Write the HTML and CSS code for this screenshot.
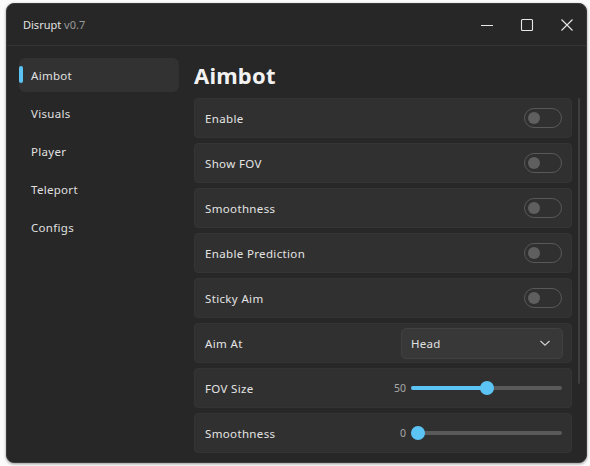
FILE: index.html
```html
<!DOCTYPE html>
<html>
<head>
<meta charset="utf-8">
<link rel="stylesheet" href="styles.css">
</head>
<body>
<div class="window">
  <div class="titlebar">
    <div class="title">Disrupt <span class="ver">v0.7</span></div>
    <div class="controls">
      <svg class="ctl" width="14" height="14" viewBox="0 0 14 14"><path d="M1 7.5h12" stroke="#e8e8e8" stroke-width="1.1"/></svg>
      <svg class="ctl" width="14" height="14" viewBox="0 0 14 14"><rect x="1.5" y="1.5" width="11" height="11" rx="1" fill="none" stroke="#e8e8e8" stroke-width="1.1"/></svg>
      <svg class="ctl" width="14" height="14" viewBox="0 0 14 14"><path d="M1.5 1.5l11 11M12.5 1.5l-11 11" stroke="#e8e8e8" stroke-width="1.1"/></svg>
    </div>
  </div>
  <div class="body">
    <nav class="sidebar">
      <div class="nav-item active"><span class="bar"></span>Aimbot</div>
      <div class="nav-item">Visuals</div>
      <div class="nav-item">Player</div>
      <div class="nav-item">Teleport</div>
      <div class="nav-item">Configs</div>
    </nav>
    <main class="content">
      <h1 class="heading">Aimbot</h1>
      <div class="scroll-area">
        <div class="rows">
          <div class="row"><span class="label">Enable</span><span class="toggle"><span class="knob"></span></span></div>
          <div class="row"><span class="label">Show FOV</span><span class="toggle"><span class="knob"></span></span></div>
          <div class="row"><span class="label">Smoothness</span><span class="toggle"><span class="knob"></span></span></div>
          <div class="row"><span class="label">Enable Prediction</span><span class="toggle"><span class="knob"></span></span></div>
          <div class="row"><span class="label">Sticky Aim</span><span class="toggle"><span class="knob"></span></span></div>
          <div class="row"><span class="label">Aim At</span>
            <div class="select"><span>Head</span>
              <svg width="12" height="8" viewBox="0 0 12 8"><path d="M1.5 2l4.5 4.2L10.5 2" fill="none" stroke="#d0d0d0" stroke-width="1.2"/></svg>
            </div>
          </div>
          <div class="row"><span class="label">FOV Size</span>
            <div class="slider"><span class="val">50</span><div class="track"><div class="fill" style="width:50%"></div><div class="thumb" style="left:50%"></div></div></div>
          </div>
          <div class="row"><span class="label">Smoothness</span>
            <div class="slider"><span class="val">0</span><div class="track"><div class="fill" style="width:0%"></div><div class="thumb start" style="left:0%"></div></div></div>
          </div>
        </div>
        <div class="scrollbar"><div class="sb-thumb"></div></div>
      </div>
    </main>
  </div>
</div>
</body>
</html>
```

FILE: styles.css
```css
* { box-sizing: border-box; }
html, body { margin: 0; padding: 0; background: #fbfbfb; }
body {
  width: 590px; height: 466px; overflow: hidden;
  font-family: "Noto Sans", "Open Sans", sans-serif;
  color: #e6e6e6;
  padding: 3px 3px 3px 6px;
}
.window {
  width: 581px; height: 460px;
  background: #272727;
  border-radius: 8px;
  border: 1px solid #3a3a3a;
  overflow: hidden;
  display: flex; flex-direction: column;
  box-shadow: 0 1px 3px rgba(0,0,0,0.4);
}
.titlebar {
  height: 42px; flex: none;
  display: flex; align-items: center; justify-content: space-between;
  padding-left: 16px;
  border-bottom: 1px solid #353535;
}
.title { font-size: 11px; letter-spacing: 0; color: #e2e2e2; }
.ver { color: #9a9a9a; }
.controls { display: flex; align-items: center; gap: 26px; padding-right: 12px; }
.ctl { display: block; }
.body { flex: 1; display: flex; min-height: 0; }
.sidebar {
  width: 186px; flex: none;
  padding: 12px 14px 0 12px;
  display: flex; flex-direction: column; gap: 4px;
}
.nav-item {
  position: relative;
  height: 34px; display: flex; align-items: center;
  padding-left: 12px;
  font-size: 11.5px; letter-spacing: 0.3px; color: #e0e0e0;
  border-radius: 6px;
}
.nav-item.active { background: #323232; }
.bar {
  position: absolute; left: 0; top: 8px;
  width: 4px; height: 17px; border-radius: 2px; background: #5cc4f5;
}
.content { flex: 1; display: flex; flex-direction: column; padding-left: 1px; min-width: 0; }
.heading {
  margin: 14px 0 8px 0; font-size: 22px; font-weight: 700; line-height: 30px;
  color: #f2f2f2; letter-spacing: 0.2px;
}
.scroll-area { flex: 1; display: flex; min-height: 0; }
.rows { width: 378px; display: flex; flex-direction: column; gap: 5px; }
.row {
  height: 40px; flex: none;
  background: #303030;
  border: 1px solid #343434;
  border-radius: 4px;
  display: flex; align-items: center; justify-content: space-between;
  padding: 0 9px 0 10px;
}
.label { font-size: 11.5px; letter-spacing: 0.35px; color: #e4e4e4; }
.toggle {
  width: 38px; height: 20px; border-radius: 10px;
  border: 1px solid #595959;
  display: flex; align-items: center; padding-left: 3px;
}
.knob { width: 12px; height: 12px; border-radius: 50%; background: #5f5f5f; }
.select {
  width: 162px; height: 31px;
  margin-right: -1px;
  background: #383838; border: 1px solid #414141; border-radius: 5px;
  display: flex; align-items: center; justify-content: space-between;
  padding: 0 11px 0 9px;
  font-size: 11.5px; letter-spacing: 0.3px; color: #e0e0e0;
}
.select svg { display: block; }
.slider { display: flex; align-items: center; gap: 5px; }
.val { font-size: 10.5px; color: #a8a8a8; }
.track {
  position: relative; width: 151px; height: 4px; border-radius: 2px; background: #5a5a5a;
}
.fill { position: absolute; left: 0; top: 0; height: 4px; border-radius: 2px; background: #5cc4f5; }
.thumb {
  position: absolute; top: 50%; width: 14px; height: 14px; margin: -7px 0 0 -1px;
  border-radius: 50%; background: #5cc4f5;
  transform: translateX(-6px);
}
.thumb.start { transform: translateX(1px); }
.scrollbar { width: 2px; margin-left: 6px; position: relative; }
.sb-thumb { position: absolute; top: 0; left: 0; width: 2px; height: 286px; background: #3f3f3f; border-radius: 1px; }
```
